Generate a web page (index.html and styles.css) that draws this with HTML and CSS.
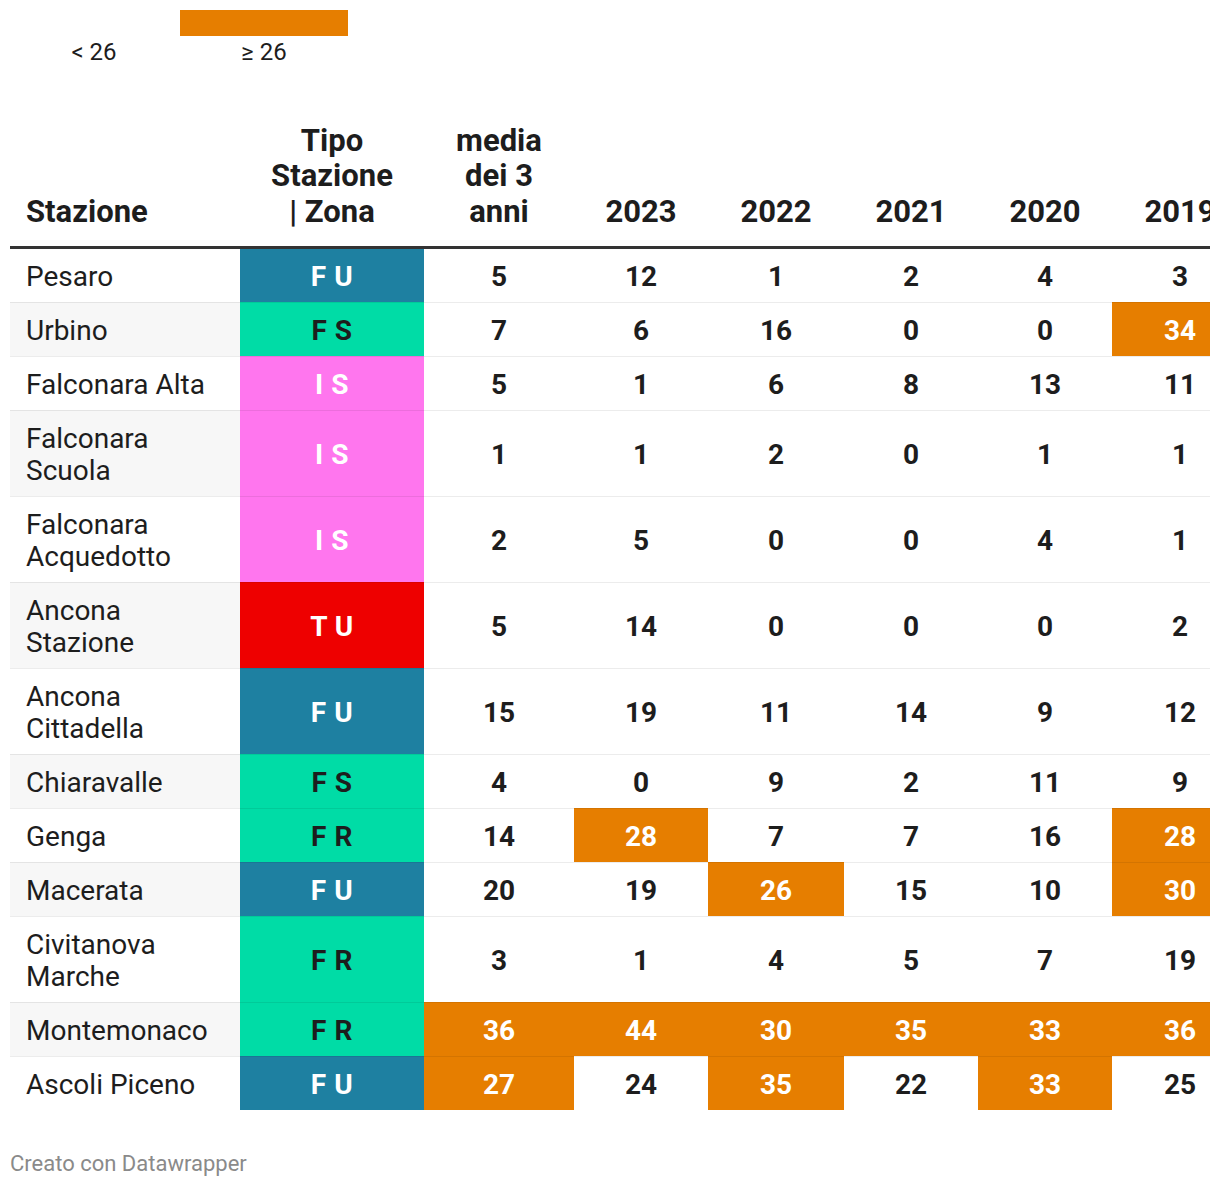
FILE: index.html
```html
<!DOCTYPE html>
<html lang="it">
<head>
<meta charset="utf-8">
<title>Stazioni</title>
<link rel="stylesheet" href="styles.css">
</head>
<body>
<div class="chart">
  <div class="legend">
    <div class="legend-item">
      <div class="legend-bar low"></div>
      <div class="legend-label">&lt; 26</div>
    </div>
    <div class="legend-item">
      <div class="legend-bar high"></div>
      <div class="legend-label">≥ 26</div>
    </div>
  </div>

  <div class="table-wrap">
    <table class="data">
      <colgroup>
        <col class="c-name"><col class="c-tipo"><col class="c-media">
        <col class="c-y"><col class="c-y2"><col class="c-y"><col class="c-y"><col class="c-y2">
      </colgroup>
      <thead>
        <tr>
          <th class="name">Stazione</th>
          <th>Tipo<br>Stazione<br>| Zona</th>
          <th>media<br>dei 3<br>anni</th>
          <th>2023</th>
          <th>2022</th>
          <th>2021</th>
          <th>2020</th>
          <th>2019</th>
        </tr>
      </thead>
      <tbody>
        <tr><td class="name">Pesaro</td><td class="tipo fu">F U</td><td>5</td><td>12</td><td>1</td><td>2</td><td>4</td><td>3</td></tr>
        <tr><td class="name">Urbino</td><td class="tipo fs">F S</td><td>7</td><td>6</td><td>16</td><td>0</td><td>0</td><td class="hot">34</td></tr>
        <tr><td class="name">Falconara Alta</td><td class="tipo is">I S</td><td>5</td><td>1</td><td>6</td><td>8</td><td>13</td><td>11</td></tr>
        <tr><td class="name">Falconara Scuola</td><td class="tipo is">I S</td><td>1</td><td>1</td><td>2</td><td>0</td><td>1</td><td>1</td></tr>
        <tr><td class="name">Falconara Acquedotto</td><td class="tipo is">I S</td><td>2</td><td>5</td><td>0</td><td>0</td><td>4</td><td>1</td></tr>
        <tr><td class="name">Ancona Stazione</td><td class="tipo tu">T U</td><td>5</td><td>14</td><td>0</td><td>0</td><td>0</td><td>2</td></tr>
        <tr><td class="name">Ancona Cittadella</td><td class="tipo fu">F U</td><td>15</td><td>19</td><td>11</td><td>14</td><td>9</td><td>12</td></tr>
        <tr><td class="name">Chiaravalle</td><td class="tipo fs">F S</td><td>4</td><td>0</td><td>9</td><td>2</td><td>11</td><td>9</td></tr>
        <tr><td class="name">Genga</td><td class="tipo fr">F R</td><td>14</td><td class="hot">28</td><td>7</td><td>7</td><td>16</td><td class="hot">28</td></tr>
        <tr><td class="name">Macerata</td><td class="tipo fu">F U</td><td>20</td><td>19</td><td class="hot">26</td><td>15</td><td>10</td><td class="hot">30</td></tr>
        <tr><td class="name">Civitanova Marche</td><td class="tipo fr">F R</td><td>3</td><td>1</td><td>4</td><td>5</td><td>7</td><td>19</td></tr>
        <tr><td class="name">Montemonaco</td><td class="tipo fr">F R</td><td class="hot">36</td><td class="hot">44</td><td class="hot">30</td><td class="hot">35</td><td class="hot">33</td><td class="hot">36</td></tr>
        <tr><td class="name">Ascoli Piceno</td><td class="tipo fu">F U</td><td class="hot">27</td><td>24</td><td class="hot">35</td><td>22</td><td class="hot">33</td><td>25</td></tr>
      </tbody>
    </table>
  </div>

  <div class="footer">Creato con Datawrapper</div>
</div>
</body>
</html>
```

FILE: styles.css
```css
* { box-sizing: border-box; }

body {
  margin: 0;
  background: #ffffff;
  font-family: Roboto, "Liberation Sans", sans-serif;
  color: #1d1d1d;
}

.chart {
  padding: 10px;
}

/* legend */
.legend {
  display: flex;
  gap: 2px;
}
.legend-item {
  width: 168px;
  display: flex;
  flex-direction: column;
  align-items: center;
}
.legend-bar {
  width: 100%;
  height: 26px;
}
.legend-bar.low { background: #ffffff; }
.legend-bar.high { background: #e67e00; }
.legend-label {
  font-size: 24px;
  line-height: 32px;
  color: #1d1d1d;
}

/* table */
.table-wrap {
  width: 1200px;
  overflow: hidden;
  margin-top: 54.5px;
}
.data {
  width: 1238px;
  table-layout: fixed;
  border-collapse: separate;
  border-spacing: 0;
}
.c-name { width: 230px; }
.c-tipo { width: 184px; }
.c-media { width: 150px; }
.c-y { width: 134px; }
.c-y2 { width: 136px; }

.data th {
  font-size: 31px;
  line-height: 35.5px;
  font-weight: 700;
  text-align: center;
  vertical-align: bottom;
  padding: 0 8px 17px;
  border-bottom: 3px solid #333333;
  color: #1d1d1d;
}
.data th.name { text-align: left; padding-left: 16px; }

.data td {
  font-size: 28px;
  line-height: 32px;
  font-weight: 700;
  text-align: center;
  vertical-align: middle;
  padding: 12px 16px 9px;
  background: #ffffff;
  border-top: 1px solid rgba(0, 0, 0, 0.075);
}
.data tbody tr:first-child td { border-top: 0; }

.data td.name {
  text-align: left;
  font-weight: 400;
  padding-right: 20px;
}
.data tbody tr:nth-child(even) td.name { background: #f7f7f7; }

.data td.tipo { letter-spacing: 0.5px; }
.tipo.fu { background: #1e80a1; color: #ffffff; }
.tipo.fs { background: #00dca6; color: #1d1d1d; }
.tipo.fr { background: #00dca6; color: #1d1d1d; }
.tipo.is { background: #ff76ee; color: #ffffff; }
.tipo.tu { background: #ee0000; color: #ffffff; }

.data td.hot { background: #e67e00; color: #ffffff; }

.footer {
  margin-top: 41px;
  font-size: 22px;
  line-height: 26px;
  color: #8a8a8a;
}
```
